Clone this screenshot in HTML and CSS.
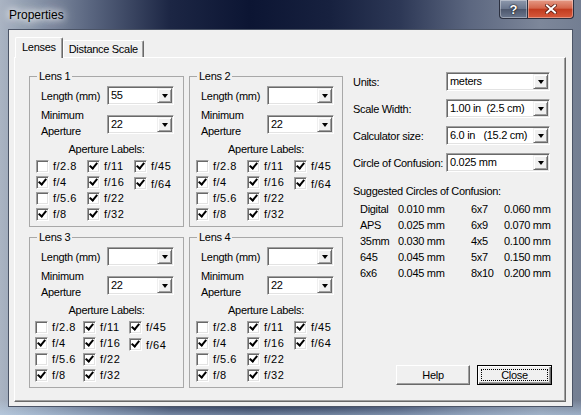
FILE: index.html
```html
<!DOCTYPE html>
<html lang="en">
<head>
    <meta charset="UTF-8">
    <title>Properties</title>
    <link rel="stylesheet" href="styles.css">
</head>
<body>
    <div class="window">
        <div class="titlebar">
            <span class="title">Properties</span>
            <div class="caps">
                <span class="cap cap-help">?</span>
                <span class="cap cap-close">
                    <svg width="12" height="10" viewBox="0 0 12 10">
                        <path d="M2 1.5 L10 8.5 M10 1.5 L2 8.5" stroke="#5a1a10" stroke-width="3.6" stroke-linecap="square"/>
                        <path d="M2 1.5 L10 8.5 M10 1.5 L2 8.5" stroke="#fff" stroke-width="2" stroke-linecap="square"/>
                    </svg>
                </span>
            </div>
        </div>

        <div class="client">
            <div class="tabs">
                <span class="tab active">Lenses</span>
                <span class="tab">Distance Scale</span>
            </div>

            <div class="panel">
                <div class="lenses">
                    <!-- Lens 1 -->
                    <fieldset class="lens">
                        <legend>Lens 1</legend>
                        <div class="row">
                            <span>Length (mm)</span>
                            <div class="combo"><span class="val">55</span><span class="drop"></span></div>
                        </div>
                        <div class="row tall">
                            <span>Minimum<br>Aperture</span>
                            <div class="combo"><span class="val">22</span><span class="drop"></span></div>
                        </div>
                        <div class="caption">Aperture Labels:</div>
                        <div class="checks">
                            <label class="check"><span class="cb"></span>f/2.8</label>
                            <label class="check"><span class="cb on"></span>f/4</label>
                            <label class="check"><span class="cb"></span>f/5.6</label>
                            <label class="check"><span class="cb on"></span>f/8</label>
                            <label class="check"><span class="cb on"></span>f/11</label>
                            <label class="check"><span class="cb on"></span>f/16</label>
                            <label class="check"><span class="cb on"></span>f/22</label>
                            <label class="check"><span class="cb on"></span>f/32</label>
                            <label class="check"><span class="cb on"></span>f/45</label>
                            <label class="check low"><span class="cb on"></span>f/64</label>
                        </div>
                    </fieldset>

                    <!-- Lens 2 -->
                    <fieldset class="lens">
                        <legend>Lens 2</legend>
                        <div class="row">
                            <span>Length (mm)</span>
                            <div class="combo"><span class="val"></span><span class="drop"></span></div>
                        </div>
                        <div class="row tall">
                            <span>Minimum<br>Aperture</span>
                            <div class="combo"><span class="val">22</span><span class="drop"></span></div>
                        </div>
                        <div class="caption">Aperture Labels:</div>
                        <div class="checks">
                            <label class="check"><span class="cb"></span>f/2.8</label>
                            <label class="check"><span class="cb on"></span>f/4</label>
                            <label class="check"><span class="cb"></span>f/5.6</label>
                            <label class="check"><span class="cb on"></span>f/8</label>
                            <label class="check"><span class="cb on"></span>f/11</label>
                            <label class="check"><span class="cb on"></span>f/16</label>
                            <label class="check"><span class="cb on"></span>f/22</label>
                            <label class="check"><span class="cb on"></span>f/32</label>
                            <label class="check"><span class="cb on"></span>f/45</label>
                            <label class="check low"><span class="cb on"></span>f/64</label>
                        </div>
                    </fieldset>

                    <!-- Lens 3 -->
                    <fieldset class="lens narrow">
                        <legend>Lens 3</legend>
                        <div class="row">
                            <span>Length (mm)</span>
                            <div class="combo"><span class="val"></span><span class="drop"></span></div>
                        </div>
                        <div class="row tall">
                            <span>Minimum<br>Aperture</span>
                            <div class="combo"><span class="val">22</span><span class="drop"></span></div>
                        </div>
                        <div class="caption">Aperture Labels:</div>
                        <div class="checks">
                            <label class="check"><span class="cb"></span>f/2.8</label>
                            <label class="check"><span class="cb on"></span>f/4</label>
                            <label class="check"><span class="cb"></span>f/5.6</label>
                            <label class="check"><span class="cb on"></span>f/8</label>
                            <label class="check"><span class="cb on"></span>f/11</label>
                            <label class="check"><span class="cb on"></span>f/16</label>
                            <label class="check"><span class="cb on"></span>f/22</label>
                            <label class="check"><span class="cb on"></span>f/32</label>
                            <label class="check"><span class="cb on"></span>f/45</label>
                            <label class="check low"><span class="cb on"></span>f/64</label>
                        </div>
                    </fieldset>

                    <!-- Lens 4 -->
                    <fieldset class="lens">
                        <legend>Lens 4</legend>
                        <div class="row">
                            <span>Length (mm)</span>
                            <div class="combo"><span class="val"></span><span class="drop"></span></div>
                        </div>
                        <div class="row tall">
                            <span>Minimum<br>Aperture</span>
                            <div class="combo"><span class="val">22</span><span class="drop"></span></div>
                        </div>
                        <div class="caption">Aperture Labels:</div>
                        <div class="checks">
                            <label class="check"><span class="cb"></span>f/2.8</label>
                            <label class="check"><span class="cb on"></span>f/4</label>
                            <label class="check"><span class="cb"></span>f/5.6</label>
                            <label class="check"><span class="cb on"></span>f/8</label>
                            <label class="check"><span class="cb on"></span>f/11</label>
                            <label class="check"><span class="cb on"></span>f/16</label>
                            <label class="check"><span class="cb on"></span>f/22</label>
                            <label class="check"><span class="cb on"></span>f/32</label>
                            <label class="check"><span class="cb on"></span>f/45</label>
                            <label class="check"><span class="cb on"></span>f/64</label>
                        </div>
                    </fieldset>
                </div>

                <div class="settings">
                    <div class="settings-form">
                        <span>Units:</span>
                        <div class="combo"><span class="val">meters</span><span class="drop"></span></div>
                        <span>Scale Width:</span>
                        <div class="combo"><span class="val">1.00 in  (2.5 cm)</span><span class="drop"></span></div>
                        <span>Calculator size:</span>
                        <div class="combo"><span class="val">6.0 in   (15.2 cm)</span><span class="drop"></span></div>
                        <span>Circle of Confusion:</span>
                        <div class="combo"><span class="val">0.025 mm</span><span class="drop"></span></div>
                    </div>

                    <div class="suggest">Suggested Circles of Confusion:</div>
                    <div class="coc">
                        <span>Digital</span><span>0.010 mm</span><span>6x7</span><span>0.060 mm</span>
                        <span>APS</span><span>0.025 mm</span><span>6x9</span><span>0.070 mm</span>
                        <span>35mm</span><span>0.030 mm</span><span>4x5</span><span>0.100 mm</span>
                        <span>645</span><span>0.045 mm</span><span>5x7</span><span>0.150 mm</span>
                        <span>6x6</span><span>0.045 mm</span><span>8x10</span><span>0.200 mm</span>
                    </div>

                    <div class="actions">
                        <button class="btn">Help</button>
                        <button class="btn default"><span class="focus">Close</span></button>
                    </div>
                </div>
            </div>
        </div>
    </div>
</body>
</html>
```

FILE: styles.css
```css
body {
    margin: 0;
    font-family: "Liberation Sans", Arial, sans-serif;
    font-size: 11px;
    letter-spacing: -0.3px;
    color: #000;
    background: #6f7a8e;
}
.window {
    width: 581px;
    height: 415px;
    box-sizing: border-box;
    padding: 0 8px 8px;
    display: flex;
    flex-direction: column;
    background:
        linear-gradient(180deg, rgba(190, 215, 240, 0) 400px, rgba(190, 215, 240, 0.55) 415px),
        linear-gradient(90deg, #aab4c3 0, #97a3b5 20px, #5a6680 90px, #1c2644 170px, #0c1533 250px, #17213f 330px, #2d3856 400px, #5c6780 470px, #7d879a 540px, #737e92 581px);
}

/* title bar */
.titlebar {
    height: 29px;
    display: flex;
    justify-content: space-between;
    align-items: flex-start;
}
.title {
    margin: 8px 0 0 1px;
    font-size: 12px;
    letter-spacing: 0;
    line-height: 14px;
    text-shadow: 0 0 6px #fff, 0 0 10px #fff, 0 0 14px rgba(255, 255, 255, 0.8);
}
.caps {
    display: flex;
    margin-right: -1px;
}
.cap {
    height: 19px;
    box-sizing: border-box;
    display: flex;
    align-items: center;
    justify-content: center;
    border: 1px solid #2b3040;
    border-top: none;
    box-shadow: inset 0 0 0 1px rgba(255, 255, 255, 0.35);
}
.cap-help {
    width: 28px;
    border-radius: 0 0 0 4px;
    border-right: none;
    background: linear-gradient(180deg, #8e99ad 0, #69758c 50%, #4c566c 51%, #6b778e 100%);
    color: #fff;
    font-weight: bold;
    font-size: 13px;
    letter-spacing: 0;
    text-shadow: 0 0 2px #000, 0 0 1px #000;
}
.cap-close {
    width: 47px;
    border-radius: 0 0 4px 0;
    background: linear-gradient(180deg, #e59a86 0, #d4664c 45%, #c23c20 52%, #d75a3c 100%);
}

/* client area */
.client {
    flex: 1;
    background: #f0f0f0;
    border: 1px solid #4b5466;
    padding: 7px 6px 0 5px;
}
.tabs {
    display: flex;
    align-items: flex-end;
    height: 20px;
    margin-left: 1px;
    position: relative;
    z-index: 1;
}
.tab {
    height: 17px;
    box-sizing: border-box;
    padding: 0 5px;
    line-height: 16px;
    background: #f0f0f0;
    border: 1px solid;
    border-color: #fff #696969 transparent #fff;
    border-bottom: none;
    border-radius: 2px 2px 0 0;
    box-shadow: inset -1px 0 0 #a0a0a0;
}
.tab.active {
    height: 21px;
    margin-bottom: -1px;
    padding: 0 6px;
    line-height: 19px;
}
.panel {
    height: 345px;
    box-sizing: border-box;
    border: 1px solid;
    border-color: #fff #696969 #696969 #fff;
    box-shadow: inset -1px -1px 0 #a0a0a0;
    display: flex;
    padding: 12px 13px 0 14px;
}

/* lens group boxes */
.lenses {
    display: grid;
    grid-template-columns: 155px 154px;
    grid-template-rows: 157px 157px;
    gap: 4px 5px;
}
.lens {
    margin: 0;
    padding: 3px 0 0 0;
    min-width: 0;
    box-sizing: border-box;
    border: 1px solid #a8a8a8;
}
.lens legend {
    margin-left: 7px;
    padding: 0 2px;
    line-height: 13px;
}
.row {
    display: grid;
    grid-template-columns: 66px 67px;
    align-items: center;
    padding-left: 11px;
}
.row.tall {
    margin-top: 2px;
    line-height: 16px;
}
.row.tall .combo {
    margin-top: 3px;
}
.caption {
    text-align: center;
    line-height: 14px;
    margin-top: 3px;
}
.checks {
    display: grid;
    grid-template-columns: 51px 47px auto;
    grid-template-rows: repeat(4, 16px);
    grid-auto-flow: column;
    margin-top: 2px;
    padding-left: 6px;
}
.narrow .checks {
    grid-template-columns: 48px 46px auto;
    padding-left: 5px;
}
.check {
    display: flex;
    align-items: center;
    gap: 4px;
    letter-spacing: 0.5px;
}
.check.low {
    margin-top: 3px;
}
.cb {
    width: 13px;
    height: 13px;
    box-sizing: border-box;
    position: relative;
    background: #fff;
    border: 1px solid;
    border-color: #a0a0a0 #fff #fff #a0a0a0;
    box-shadow: inset 1px 1px 0 #696969, inset -1px -1px 0 #e3e3e3;
}
.cb.on::after {
    content: "";
    position: absolute;
    left: 3px;
    top: 0;
    width: 3px;
    height: 6px;
    border: solid #000;
    border-width: 0 2px 2px 0;
    transform: rotate(40deg);
}

/* combo box */
.combo {
    height: 19px;
    box-sizing: border-box;
    display: flex;
    background: #fff;
    border: 1px solid;
    border-color: #a0a0a0 #fff #fff #a0a0a0;
    box-shadow: inset 1px 1px 0 #696969, inset -1px -1px 0 #e3e3e3;
    padding: 1px;
}
.combo .val {
    flex: 1;
    padding-left: 2px;
    line-height: 15px;
    white-space: pre;
    overflow: hidden;
}
.combo .drop {
    width: 15px;
    box-sizing: border-box;
    background: #f0f0f0;
    border: 1px solid;
    border-color: #f0f0f0 #696969 #696969 #f0f0f0;
    box-shadow: inset 1px 1px 0 #fff, inset -1px -1px 0 #a0a0a0;
    display: flex;
    align-items: center;
    justify-content: center;
}
.combo .drop::after {
    content: "";
    border-top: 4px solid #000;
    border-left: 3.5px solid transparent;
    border-right: 3.5px solid transparent;
}

/* right side settings */
.settings {
    width: 199px;
    margin-left: 10px;
    padding-top: 2px;
    display: flex;
    flex-direction: column;
}
.settings-form {
    display: grid;
    grid-template-columns: 93px 104px;
    row-gap: 8px;
    align-items: center;
}
.suggest {
    margin-top: 12px;
    line-height: 14px;
}
.coc {
    display: grid;
    grid-template-columns: 38px 73px 33px auto;
    grid-auto-rows: 16px;
    align-items: center;
    margin: 3px 0 0 7px;
}
.actions {
    margin-top: auto;
    margin-bottom: 16px;
    display: flex;
    justify-content: flex-end;
    gap: 7px;
}
.btn {
    width: 74px;
    height: 20px;
    padding: 0;
    font: inherit;
    letter-spacing: inherit;
    color: #000;
    background: #f0f0f0;
    border: 1px solid;
    border-color: #fff #696969 #696969 #fff;
    box-shadow: inset -1px -1px 0 #a0a0a0;
}
.btn.default {
    width: 75px;
    border: 1px solid #000;
    box-shadow: inset 1px 1px 0 #fff, inset -1px -1px 0 #696969, inset -2px -2px 0 #a0a0a0;
    padding: 3px;
}
.btn .focus {
    display: block;
    height: 100%;
    box-sizing: border-box;
    line-height: 10px;
    border: 1px dotted #000;
}
```
